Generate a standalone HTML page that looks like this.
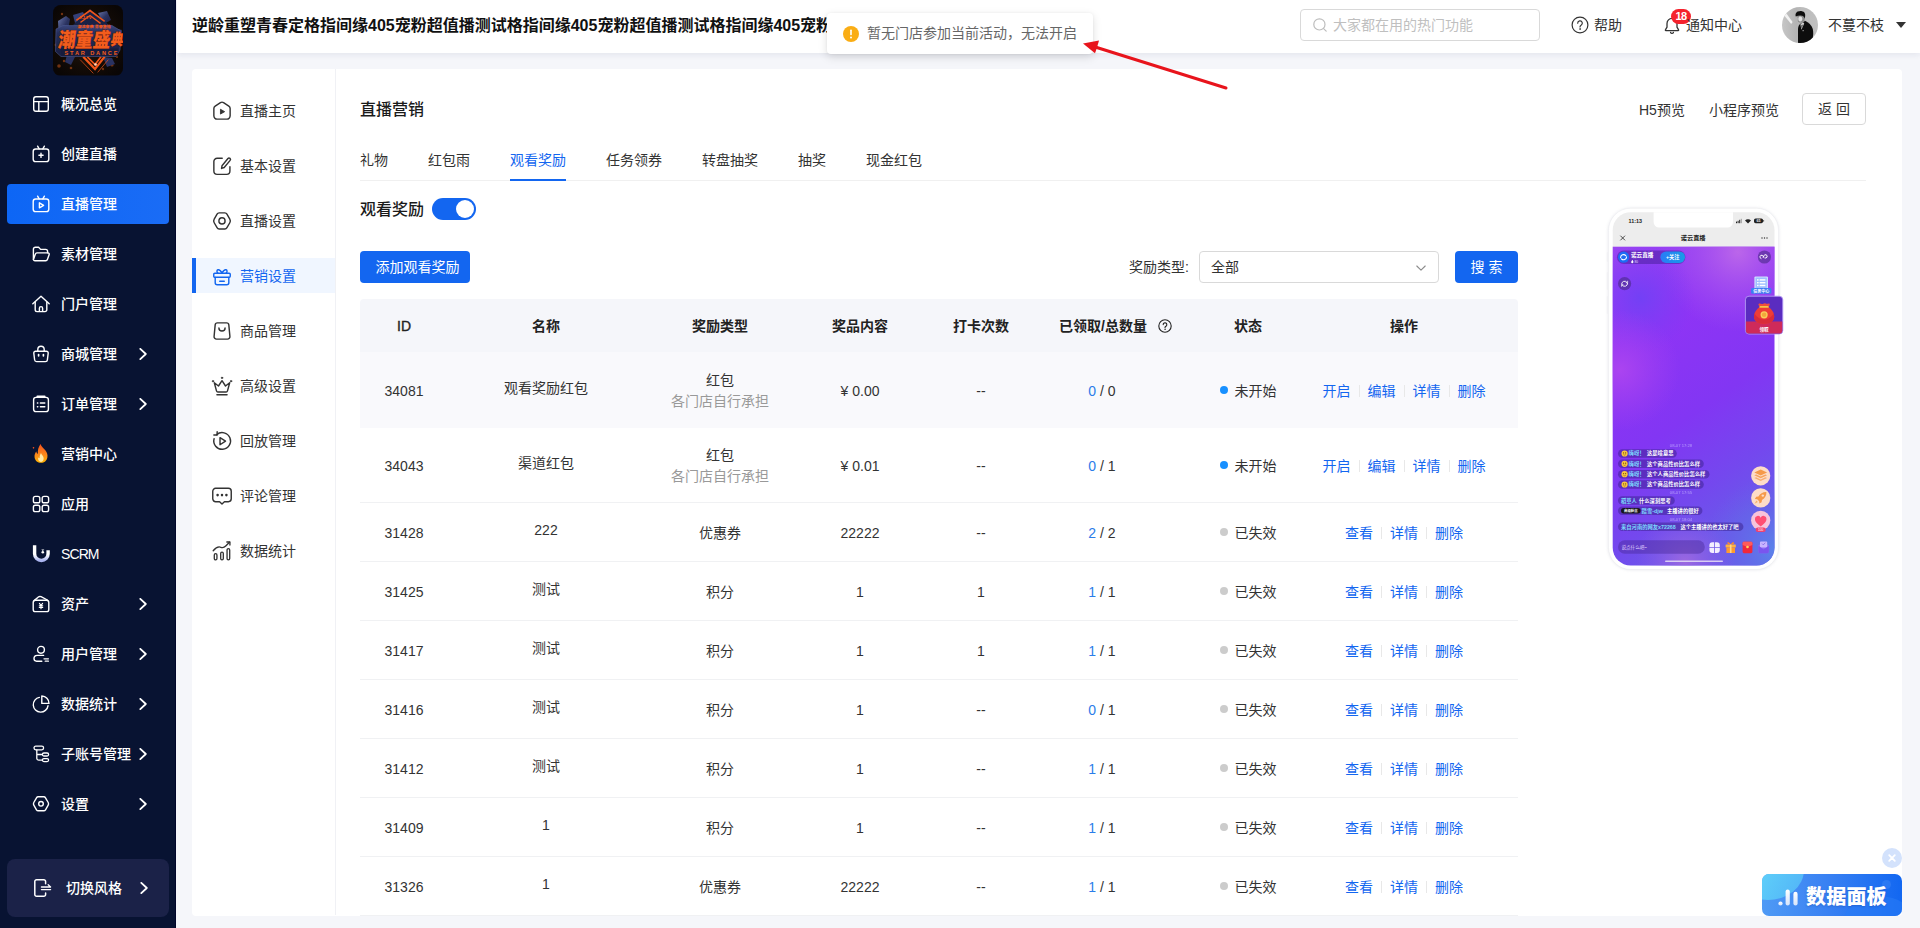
<!DOCTYPE html>
<html lang="zh-CN">
<head>
<meta charset="utf-8">
<title>直播营销</title>
<style>
*{box-sizing:border-box;margin:0;padding:0}
html,body{width:1920px;height:928px;overflow:hidden}
body{position:relative;background:#f5f6fa;font-family:"Liberation Sans","Noto Sans CJK SC",sans-serif;font-size:14px;color:#333;line-height:1}
svg{display:block}
.abs{position:absolute}
/* sidebar */
#side{position:absolute;left:0;top:0;width:176px;height:928px;background:#081332;border-right:1px solid #01062a}
#logo{position:absolute;left:53px;top:5px;width:70px;height:71px;border-radius:8px;overflow:hidden;background:#0a0d1c}
.nav{position:absolute;left:7px;width:162px;height:40px;border-radius:4px;color:#fff;font-size:14px}
.nav.on{background:linear-gradient(90deg,#0d66f5,#1a6cf6)}
.nav .ic{position:absolute;left:24px;top:10px;width:20px;height:20px}
.nav .tx{position:absolute;left:54px;top:0;line-height:40px;white-space:nowrap;font-weight:500}
.nav .ar{position:absolute;left:130px;top:14px;width:12px;height:12px}
#sw{position:absolute;left:7px;top:859px;width:162px;height:58px;border-radius:8px;background:#1b2248;color:#fff}
/* header */
#hd{position:absolute;left:177px;top:0;width:1743px;height:53px;background:#fff;box-shadow:0 2px 6px rgba(30,40,90,.08)}
#ttl{position:absolute;left:15px;top:0;width:636px;height:53px;line-height:52px;font-size:16px;font-weight:700;color:#111;white-space:nowrap;overflow:hidden}
#srch{position:absolute;left:1123px;top:9px;width:240px;height:32px;border:1px solid #d9d9d9;border-radius:4px;background:#fff}
#srch span{position:absolute;left:32px;top:0;line-height:30px;color:#bfbfbf;font-size:14px;white-space:nowrap}
.htx{position:absolute;top:0;line-height:50px;font-size:14px;color:#333;white-space:nowrap}
/* toast */
#toast{position:absolute;left:827px;top:13px;width:266px;height:41px;background:#fff;border-radius:4px;box-shadow:0 3px 10px rgba(0,0,0,.13),0 0 3px rgba(0,0,0,.05);z-index:5}
#toast span{position:absolute;left:40px;top:0;line-height:41px;color:#666;font-size:14px;white-space:nowrap}
/* card */
#card{position:absolute;left:192px;top:69px;width:1710px;height:847px;background:#fff;border-radius:4px;overflow:hidden}
#sub{position:absolute;left:0;top:0;width:144px;height:846px;border-right:1px solid #f0f1f5}
.si{position:absolute;left:0;width:143px;height:38px;color:#333;font-size:14px}
.si.on{background:#f0f6ff;color:#1366f0;border-left:4px solid #1366f0}
.si .ic{position:absolute;left:20px;top:10px;width:20px;height:20px;transform:scale(1.1)}
.si.on .ic{left:16px;transform:scale(1.03)}
.si .tx{position:absolute;left:48px;top:1px;line-height:38px;white-space:nowrap}
.si.on .tx{left:44px}

/* main */
#main{position:absolute;left:168px;top:0;width:1542px;height:846px}
#h1{position:absolute;left:0;top:25px;line-height:32px;font-size:16px;font-weight:500;color:#1a1a1a}
.lk{position:absolute;top:25px;line-height:32px;font-size:14px;color:#333;white-space:nowrap}
#back{position:absolute;left:1442px;top:24px;width:64px;height:32px;border:1px solid #d9d9d9;border-radius:4px;text-align:center;line-height:30px;font-size:14px;color:#333}
#tabs{position:absolute;left:0;top:70px;width:1506px;height:42px;border-bottom:1px solid #f0f0f0}
#tabs span{position:absolute;top:0;line-height:42px;font-size:14px;color:#333;white-space:nowrap}
#tabs span.on{color:#1366f0}
#tabs i{position:absolute;left:150px;top:40px;width:56px;height:2px;background:#1366f0}
#tg{position:absolute;left:72px;top:129px;width:44px;height:22px;border-radius:11px;background:#1366f0}
#tg i{position:absolute;right:2px;top:2px;width:18px;height:18px;border-radius:9px;background:#fff}
.btn{position:absolute;top:182px;height:32px;border-radius:4px;background:#1366f0;color:#fff;font-size:14px;line-height:32px;text-align:center;white-space:nowrap}
#sel{position:absolute;left:839px;top:182px;width:240px;height:32px;border:1px solid #d9d9d9;border-radius:4px}
/* table */
#tb{position:absolute;left:0;top:230px;width:1158px;border-collapse:separate;border-spacing:0;table-layout:fixed;font-size:14px;color:#333}
#tb th{height:53px;background:#f5f6fa;font-weight:700;color:#222;text-align:center;padding:0}
#tb td{height:59px;text-align:center;padding:2px 0 0;line-height:21px;border-bottom:1px solid #f0f1f3;vertical-align:middle;white-space:nowrap}
#tb tr.r1 td{height:76px;background:#f9f9fc;border-bottom:none}
#tb th:first-child{border-top-left-radius:4px}#tb th:last-child{border-top-right-radius:4px}
#tb tr.r2 td{height:75px}
#tb .nm{position:relative;top:-3px}
#tb .g{color:#999;line-height:21px}
#tb .b{color:#2b7de9}
#tb a{color:#1366f0;text-decoration:none}
#tb .sp{display:inline-block;width:1px;height:12px;background:#e8e8e8;margin:0 8px;vertical-align:-1px}
#tb .dot{display:inline-block;width:8px;height:8px;border-radius:4px;margin-right:7px;vertical-align:2px}
</style>
</head>
<body>
<div id="side">
  <div id="logo">
    <svg width="70" height="70" viewBox="0 0 70 70" font-family="'Liberation Sans','Noto Sans CJK SC',sans-serif">
      <defs>
        <radialGradient id="lg1" cx="50%" cy="50%" r="62%"><stop offset="0" stop-color="#2a1a10"/><stop offset=".6" stop-color="#140c07"/><stop offset="1" stop-color="#0a0605"/></radialGradient>
        <linearGradient id="lg2" x1="0" y1="0" x2="0" y2="1"><stop offset="0" stop-color="#3a467c"/><stop offset=".25" stop-color="#252d5a"/><stop offset="1" stop-color="#181d3e"/></linearGradient>
        <linearGradient id="lg3" x1="0" y1="0" x2="1" y2="1"><stop offset="0" stop-color="#6a76a8"/><stop offset=".5" stop-color="#2a3260"/><stop offset="1" stop-color="#1a2044"/></linearGradient>
        <filter id="lgb" x="-20%" y="-20%" width="140%" height="140%"><feGaussianBlur stdDeviation=".5"/></filter>
      </defs>
      <rect width="70" height="70" fill="url(#lg1)"/>
      <g fill="#c4561a" opacity=".55" filter="url(#lgb)"><circle cx="6" cy="61" r="1.800"/><circle cx="11" cy="56" r="1.200"/><circle cx="59" cy="60" r="1.600"/><circle cx="64" cy="52" r="1.100"/><circle cx="9" cy="9" r="1.200"/><circle cx="18" cy="63" r="1.300"/><circle cx="50" cy="64" r="1.200"/><circle cx="3" cy="40" r="1.400"/></g>
      <!-- shards -->
      <g filter="url(#lgb)">
        <path d="M5 16l8-5 4 3-3 18-8 3z" fill="url(#lg3)"/>
        <path d="M45 8l9-2 4 9-7 4z" fill="url(#lg3)"/>
        <path d="M61 23l8 2-1 9-7-1z" fill="url(#lg3)"/>
        <path d="M14 50l8 2-4 8-6-3z" fill="#2a3260"/>
        <path d="M50 52l9 1 3 6-8 3z" fill="#2a3260"/>
        <path d="M20 10l10-3 3 6-11 5z" fill="#343f78"/>
      </g>
      <!-- diamond neon -->
      <path d="M37 4l19 16-19 10-17-10z" fill="#1a2146"/>
      <g fill="none" stroke="#f0551a" stroke-linecap="square">
        <path d="M24 15l13-9.500 14 10.500" stroke-width="1.600"/>
        <path d="M28 17l9-6.500 10 7.500" stroke-width="1.300"/>
        <path d="M31 52.500l11 11.500 9-11.500" stroke-width="2.200"/>
        <path d="M35 52.500l7 7 5.500-7" stroke-width="1.700"/>
        <path d="M27.500 55l12.500 13 M55 55l-10 12" stroke-width="1" opacity=".7"/>
      </g>
      <circle cx="42.500" cy="59.500" r="1.300" fill="#ffd9c0" filter="url(#lgb)"/>
      <!-- plaque -->
      <path d="M3 24l7-3.500h49l9 5.500-1 19-4 6.500H8l-5.500-5z" fill="url(#lg2)" stroke="#4a588f" stroke-width=".6"/>
      <path d="M7 43.600h58v7H9z" fill="#171c3d"/>
      <text x="26.500" y="13.900" font-size="4.400" font-weight="700" fill="#f0551a">XJ TV</text>
      <text x="24.600" y="23.200" font-size="3.900" font-weight="900" fill="#f0551a" letter-spacing=".1">潮流来袭 青春集结</text>
      <g transform="translate(4.500 41.600) skewX(-7) scale(1 1.220)">
        <text x="0" y="0" font-size="16.400" font-weight="900" fill="#f25c1c" stroke="#7a2206" stroke-width=".5" paint-order="stroke" textLength="52" lengthAdjust="spacingAndGlyphs">潮童盛</text>
        <text x="52.600" y="-1" font-size="12.600" font-weight="900" fill="#f25c1c" stroke="#7a2206" stroke-width=".5" paint-order="stroke">典</text>
      </g>
      <text x="38" y="49.600" text-anchor="middle" font-size="5.600" font-weight="700" fill="#f25c1c" textLength="53" lengthAdjust="spacing">STAR DANCE</text>
    </svg>
  </div>

  <div class="nav" style="top:84px"><svg class="ic" viewBox="0 0 20 20" fill="none" stroke="#fff" stroke-width="1.4" stroke-linejoin="round"><rect x="2.7" y="2.7" width="14.6" height="14.6" rx="2.2"/><path d="M2.7 7.6h14.6M7.8 7.6v9.7"/></svg><span class="tx">概况总览</span></div>

  <div class="nav" style="top:134px"><svg class="ic" viewBox="0 0 20 20" fill="none" stroke="#fff" stroke-width="1.4" stroke-linecap="round" stroke-linejoin="round"><rect x="2.2" y="5" width="15.6" height="12.6" rx="2.4"/><path d="M6.6 2.2l1.6 2.6M13.4 2.2l-1.6 2.6M10 9.2v4.2M7.9 11.3h4.2"/></svg><span class="tx">创建直播</span></div>

  <div class="nav on" style="top:184px"><svg class="ic" viewBox="0 0 20 20" fill="none" stroke="#fff" stroke-width="1.4" stroke-linecap="round" stroke-linejoin="round"><rect x="2.2" y="5" width="15.6" height="12.6" rx="2.4"/><path d="M6.6 2.2l1.6 2.6M13.4 2.2l-1.6 2.6M8.4 8.8v5l4.2-2.5z"/></svg><span class="tx">直播管理</span></div>

  <div class="nav" style="top:234px"><svg class="ic" viewBox="0 0 20 20" fill="none" stroke="#fff" stroke-width="1.4" stroke-linecap="round" stroke-linejoin="round"><path d="M2.4 15.2V5.2a2 2 0 0 1 2-2h3.2l2 2.2h5a2 2 0 0 1 2 2v1.4"/><path d="M2.4 15.6l2-5.6a1.6 1.6 0 0 1 1.5-1.1h11a1.3 1.3 0 0 1 1.2 1.8l-1.7 4.9a1.8 1.8 0 0 1-1.7 1.2H4a1.6 1.6 0 0 1-1.6-1.2z"/></svg><span class="tx">素材管理</span></div>

  <div class="nav" style="top:284px"><svg class="ic" viewBox="0 0 20 20" fill="none" stroke="#fff" stroke-width="1.4" stroke-linecap="round" stroke-linejoin="round"><path d="M1.8 9.8L10 2.2l8.200 7.600"/><path d="M4.200 8.200v7.600a1.800 1.800 0 0 0 1.800 1.800h8a1.800 1.800 0 0 0 1.800-1.800V8.200"/><path d="M8.400 17.400v-3.200a1.600 1.600 0 0 1 3.200 0v3.200"/></svg><span class="tx">门户管理</span></div>

  <div class="nav" style="top:334px"><svg class="ic" viewBox="0 0 20 20" fill="none" stroke="#fff" stroke-width="1.4" stroke-linecap="round" stroke-linejoin="round"><path d="M4.600 7.200h10.800a1.800 1.800 0 0 1 1.800 2l-.8 6.600a2 2 0 0 1-2 1.800H5.600a2 2 0 0 1-2-1.800l-.8-6.600a1.800 1.800 0 0 1 1.800-2z"/><path d="M6.800 7V5.400a3.200 3.200 0 0 1 6.400 0V7"/><path d="M7.600 10.600v1.200M12.400 10.600v1.200" stroke-width="1.700"/></svg><span class="tx">商城管理</span><svg class="ar" viewBox="0 0 12 12" fill="none" stroke="#fff" stroke-width="1.8" stroke-linecap="round" stroke-linejoin="round"><path d="M3.300 .9L8.800 6 3.300 11.100"/></svg></div>

  <div class="nav" style="top:384px"><svg class="ic" viewBox="0 0 20 20" fill="none" stroke="#fff" stroke-width="1.4" stroke-linecap="round" stroke-linejoin="round"><rect x="2.600" y="3.400" width="14.800" height="14.200" rx="2.400"/><path d="M6.400 2.600h7.200" stroke-width="2"/><path d="M6.400 9h.4M6.400 12.800h.4M9.400 9h4.400M9.400 12.800h4.400"/></svg><span class="tx">订单管理</span><svg class="ar" viewBox="0 0 12 12" fill="none" stroke="#fff" stroke-width="1.8" stroke-linecap="round" stroke-linejoin="round"><path d="M3.300 .9L8.800 6 3.300 11.100"/></svg></div>

  <div class="nav" style="top:434px"><svg class="ic" viewBox="1.200 1.400 17.600 17.600"><defs><linearGradient id="fl1" x1="0" y1="0" x2="0" y2="1"><stop offset="0" stop-color="#f4511e"/><stop offset=".6" stop-color="#fb8c1a"/><stop offset="1" stop-color="#ffb300"/></linearGradient></defs><path d="M9.600 1.400c.6 2.400 2.600 3.600 4.200 5.600 1.600 2 2.200 4 1.800 6.200-.5 2.700-2.700 4.800-5.600 4.800s-5.100-2-5.600-4.600c-.4-2.200.4-4 1.400-5.400.2 1 .7 1.700 1.400 2.100-.2-3.300.6-6.300 2.400-8.700z" fill="url(#fl1)"/><path d="M10 9.400c.3 1.400 1.500 2 2.100 3.400.6 1.500.1 3.200-1.100 4.100-.6.500-1.500.5-2.100 0-1.300-.9-1.700-2.500-1.200-3.900.3.600.7.900 1.100 1 0-1.700.3-3.300 1.200-4.600z" fill="#ffe9a8"/><circle cx="3.400" cy="4.800" r=".7" fill="#f4511e"/></svg><span class="tx">营销中心</span></div>

  <div class="nav" style="top:484px"><svg class="ic" viewBox="0 0 20 20" fill="none" stroke="#fff" stroke-width="1.4" stroke-linejoin="round"><rect x="2.400" y="2.400" width="6.400" height="6.400" rx="1.900"/><rect x="11.200" y="2.400" width="6.400" height="6.400" rx="1.900"/><rect x="2.400" y="11.200" width="6.400" height="6.400" rx="1.900"/><rect x="11.200" y="11.200" width="6.400" height="6.400" rx="1.900"/></svg><span class="tx">应用</span></div>

  <div class="nav" style="top:534px"><svg class="ic" viewBox="0 0 20 20"><defs><linearGradient id="sc1" x1="0" y1="0" x2="0" y2="1"><stop offset="0" stop-color="#fff"/><stop offset=".62" stop-color="#fff"/><stop offset="1" stop-color="#aab4f0"/></linearGradient></defs><path d="M3.600 1.300v8.500a6.750 6.750 0 0 0 13.500 0V6.200" fill="none" stroke="url(#sc1)" stroke-width="3.400" stroke-linecap="butt"/><path d="M10.300 5.400l1.500 1.700 1.500-1.700z" fill="#fff"/><circle cx="11.800" cy="8.300" r="1.300" fill="#fff"/></svg><span class="tx" style="letter-spacing:-.9px">SCRM</span></div>

  <div class="nav" style="top:584px"><svg class="ic" viewBox="0 0 20 20" fill="none" stroke="#fff" stroke-width="1.400" stroke-linecap="round" stroke-linejoin="round"><rect x="2.200" y="6.200" width="15.600" height="11.400" rx="2.200"/><path d="M3.400 6.400l4-3.400c.9-.7 1.600-.7 2.600-.3l6.400 3.300"/><path d="M8.400 9.400l1.600 2 1.600-2M10 11.400v3.400M8.300 11.800h3.400M8.300 13.400h3.400" stroke-width="1.100"/></svg><span class="tx">资产</span><svg class="ar" viewBox="0 0 12 12" fill="none" stroke="#fff" stroke-width="1.8" stroke-linecap="round" stroke-linejoin="round"><path d="M3.300 .9L8.800 6 3.300 11.100"/></svg></div>

  <div class="nav" style="top:634px"><svg class="ic" viewBox="0 0 20 20" fill="none" stroke="#fff" stroke-width="1.400" stroke-linecap="round" stroke-linejoin="round"><circle cx="10" cy="5.800" r="3.400"/><path d="M12.600 11.400H6.200a3.200 3.200 0 0 0-3.200 3.200 2.600 2.600 0 0 0 2.600 2.600h5.200"/><path d="M13 14.800h4.400M14.200 17.200h3.200" stroke-width="1.300"/></svg><span class="tx">用户管理</span><svg class="ar" viewBox="0 0 12 12" fill="none" stroke="#fff" stroke-width="1.8" stroke-linecap="round" stroke-linejoin="round"><path d="M3.300 .9L8.800 6 3.300 11.100"/></svg></div>

  <div class="nav" style="top:684px"><svg class="ic" viewBox="0 0 20 20" fill="none" stroke="#fff" stroke-width="1.400" stroke-linecap="round" stroke-linejoin="round"><path d="M8.400 3.400a7.400 7.400 0 1 0 8.600 8.400"/><path d="M10.800 2v7.400h7.200A7.300 7.300 0 0 0 10.800 2z"/></svg><span class="tx">数据统计</span><svg class="ar" viewBox="0 0 12 12" fill="none" stroke="#fff" stroke-width="1.8" stroke-linecap="round" stroke-linejoin="round"><path d="M3.300 .9L8.800 6 3.300 11.100"/></svg></div>

  <div class="nav" style="top:734px"><svg class="ic" viewBox="0 0 20 20" fill="none" stroke="#fff" stroke-width="1.300" stroke-linecap="round" stroke-linejoin="round"><rect x="3" y="2.200" width="9.600" height="3.600" rx="1.800"/><rect x="11.400" y="9" width="6.200" height="3" rx="1.500"/><rect x="11.400" y="14.600" width="6.200" height="3" rx="1.500"/><path d="M5.800 5.800v8.400a2 2 0 0 0 2 2h3.400M5.800 10.500h5.400"/></svg><span class="tx">子账号管理</span><svg class="ar" viewBox="0 0 12 12" fill="none" stroke="#fff" stroke-width="1.8" stroke-linecap="round" stroke-linejoin="round"><path d="M3.300 .9L8.800 6 3.300 11.100"/></svg></div>

  <div class="nav" style="top:784px"><svg class="ic" viewBox="0 0 20 20" fill="none" stroke="#fff" stroke-width="1.400" stroke-linecap="round" stroke-linejoin="round"><path d="M7.200 2.800h5.600a2 2 0 0 1 1.700 1l2.700 4.700a2.600 2.600 0 0 1 0 2.600l-2.700 4.700a2 2 0 0 1-1.700 1H7.200a2 2 0 0 1-1.700-1l-2.700-4.700a2.600 2.600 0 0 1 0-2.600l2.700-4.700a2 2 0 0 1 1.700-1z"/><circle cx="10" cy="9.800" r="2.300"/></svg><span class="tx">设置</span><svg class="ar" viewBox="0 0 12 12" fill="none" stroke="#fff" stroke-width="1.8" stroke-linecap="round" stroke-linejoin="round"><path d="M3.300 .9L8.800 6 3.300 11.100"/></svg></div>

  <div id="sw"><svg class="abs" style="left:25px;top:18px" width="22" height="22" viewBox="0 0 22 22" fill="none" stroke="#fff" stroke-width="1.500" stroke-linecap="round" stroke-linejoin="round"><path d="M13.600 6.800V4.600a1.800 1.800 0 0 0-1.800-1.800H4.600a1.800 1.800 0 0 0-1.800 1.800v12.800a1.800 1.800 0 0 0 1.800 1.800h7.200a1.800 1.800 0 0 0 1.800-1.800v-1.400"/><path d="M9.400 10h9.200l-2.400-2.200M18.600 12.600H9.400" stroke-width="1.300"/></svg><span class="abs" style="left:59px;top:0;line-height:58px;font-size:14px;font-weight:500;white-space:nowrap">切换风格</span><svg class="abs" style="left:131px;top:23px" width="12" height="12" viewBox="0 0 12 12" fill="none" stroke="#fff" stroke-width="1.8" stroke-linecap="round" stroke-linejoin="round"><path d="M3.300 .9L8.800 6 3.300 11.100"/></svg></div>
</div>
<div id="hd">
  <div id="ttl">逆龄重塑青春定格指间缘405宠粉超值播测试格指间缘405宠粉超值播测试格指间缘405宠粉超值播测试</div>
  <div id="srch"><svg class="abs" style="left:11px;top:7px" width="16" height="16" viewBox="0 0 16 16" fill="none" stroke="#bdbdbd" stroke-width="1.2" stroke-linecap="round"><circle cx="7.400" cy="7.400" r="5.600"/><path d="M11.600 11.600l2.600 2.600"/></svg><span>大家都在用的热门功能</span></div>
  <svg class="abs" style="left:1394px;top:16px" width="18" height="18" viewBox="0 0 18 18" fill="none" stroke="#333" stroke-width="1.200" stroke-linecap="round"><circle cx="9" cy="9" r="7.900"/><path d="M6.700 7.200a2.300 2.300 0 1 1 3.400 2c-.8.500-1.100.9-1.100 1.700"/><circle cx="9" cy="13" r=".5" fill="#333" stroke-width=".6"/></svg>
  <div class="htx" style="left:1417px">帮助</div>
  <svg class="abs" style="left:1486px;top:16px" width="18" height="19" viewBox="0 0 18 19" fill="none" stroke="#333" stroke-width="1.300" stroke-linecap="round" stroke-linejoin="round"><path d="M9 2.400a5 5 0 0 0-5 5v3.800l-1.600 2.600a.5.500 0 0 0 .4.800h12.400a.5.500 0 0 0 .4-.8L14 11.200V7.400a5 5 0 0 0-5-5z"/><path d="M7.600 16.400a1.500 1.500 0 0 0 2.800 0"/></svg>
  <div class="abs" style="left:1494px;top:9px;width:20px;height:15px;border-radius:8px;background:#f5222d;color:#fff;font-size:11px;font-weight:700;line-height:15px;text-align:center;letter-spacing:-.5px">18</div>
  <div class="htx" style="left:1509px">通知中心</div>
  <svg class="abs" style="left:1605px;top:7px" width="36" height="36" viewBox="0 0 36 36"><defs><clipPath id="avc"><circle cx="18" cy="18" r="18"/></clipPath><linearGradient id="avg" x1="0" y1="0" x2="1" y2="0"><stop offset="0" stop-color="#c6c6c6"/><stop offset=".4" stop-color="#b4b4b4"/><stop offset=".55" stop-color="#bcbcbc"/><stop offset="1" stop-color="#c0c0c0"/></linearGradient><filter id="avb" x="-20%" y="-20%" width="140%" height="140%"><feGaussianBlur stdDeviation=".45"/></filter></defs><g clip-path="url(#avc)"><rect width="36" height="36" fill="url(#avg)"/><g filter="url(#avb)"><path d="M2 8.200l2.400-1.800 6.200 8.600-1.400 2z" fill="#f2f2f2"/><path d="M16 36V22.500c0-2.400.6-4.200 2-5.400l5-3.300c3.600 1.600 6.600 4.400 7.800 8.200.6 3 .5 6 0 8.600L27 36z" fill="#101010"/><path d="M18.400 17.600l2.400-2.600 1.400 1.400-2.800 6.400z" fill="#cfcfcf"/><path d="M19.300 18.400l1-.8.400 1-1.200 3z" fill="#3a3a3a"/><path d="M15 9.500c.5-1.500 2.500-2.500 5-2.300 1.800.1 2.700 1.300 2.900 3.300l-.5 3.700c-.7 1.200-2.400 1.700-4.300 1.400-1.500-.2-2.100-.8-2.300-1.700-.2-1 .2-1.800.1-2.700z" fill="#8a8a8a"/><path d="M17 9.600c1.800-.4 3 .2 3.300 1.700.3 1.500-.3 2.800-1.700 3.200-1.100.3-1.900-.3-2.200-1.400-.3-1.200-.1-2.300.6-3.500z" fill="#dedede"/><path d="M13.800 6.600c.8-2 3.400-2.800 6.200-2.400 2.400.4 3.400 2.200 3.200 4.600l-.4 3c-.5-1.700-1.400-2.700-2.800-3-2-.5-4.200-.3-6.200.8-.4-1-.4-2 0-3z" fill="#0c0c0c"/><rect x="20.400" y="23.400" width="1.600" height=".7" fill="#bbb"/></g></g></svg>
  <div class="htx" style="left:1651px">不蔓不枝</div>
  <svg class="abs" style="left:1719px;top:22px" width="10" height="6" viewBox="0 0 10 6"><path d="M0 0h10L5 6z" fill="#333"/></svg>
</div>
<div id="toast"><svg class="abs" style="left:16px;top:13px" width="16" height="16" viewBox="0 0 16 16"><circle cx="8" cy="8" r="8" fill="#faad14"/><rect x="7.200" y="3.600" width="1.600" height="5.600" rx=".6" fill="#fff"/><circle cx="8" cy="11.500" r="1" fill="#fff"/></svg><span>暂无门店参加当前活动，无法开启</span></div>
<svg class="abs" style="left:1070px;top:30px;z-index:6" width="170" height="70" viewBox="0 0 170 70"><path d="M156 58L26 17.200" stroke="#e8141c" stroke-width="3" stroke-linecap="round" fill="none"/><path d="M13 13.600L29 10.600 27 17.400 25 23.200z" fill="#e8141c"/></svg>
<div id="card">
  <div id="sub">
    <div class="si" style="top:22px"><svg class="ic" viewBox="0 0 20 20" fill="none" stroke="#333" stroke-width="1.300" stroke-linejoin="round"><path d="M8.600 2.400a2.600 2.600 0 0 1 2.800 0l4.800 3.100a2.600 2.600 0 0 1 1.200 2.200v6.700a3 3 0 0 1-3 3H5.600a3 3 0 0 1-3-3V7.700a2.600 2.600 0 0 1 1.200-2.200z"/><path d="M8.600 8.400v4.400l3.800-2.200z" fill="#333" stroke-width=".8"/></svg><span class="tx">直播主页</span></div>
    <div class="si" style="top:77px"><svg class="ic" viewBox="0 0 20 20" fill="none" stroke="#333" stroke-width="1.300" stroke-linecap="round" stroke-linejoin="round"><path d="M10.200 3H5.600a3 3 0 0 0-3 3v8.600a3 3 0 0 0 3 3h8.600a3 3 0 0 0 3-3V10.600"/><path d="M10 9.800l5.400-6.600a1.300 1.300 0 0 1 2 1.700L12 11.400l-2.400.8z"/></svg><span class="tx">基本设置</span></div>
    <div class="si" style="top:132px"><svg class="ic" viewBox="0 0 20 20" fill="none" stroke="#333" stroke-width="1.300" stroke-linejoin="round"><path d="M7.400 2.600h5.200a2.200 2.200 0 0 1 1.900 1.100l2.600 4.500a3.400 3.400 0 0 1 0 3.400l-2.600 4.500a2.200 2.200 0 0 1-1.900 1.100H7.400a2.200 2.200 0 0 1-1.900-1.100l-2.600-4.500a3.400 3.400 0 0 1 0-3.400l2.600-4.500a2.200 2.200 0 0 1 1.900-1.100z"/><circle cx="10" cy="9.900" r="2.800"/></svg><span class="tx">直播设置</span></div>
    <div class="si on" style="top:189px;height:35px"><svg class="ic" style="top:9px" viewBox="0 0 20 20" fill="none" stroke="#1366f0" stroke-width="1.400" stroke-linecap="round" stroke-linejoin="round"><path d="M3 6.400h14a1 1 0 0 1 1 1v1.800a1 1 0 0 1-1 1H3a1 1 0 0 1-1-1V7.400a1 1 0 0 1 1-1z"/><path d="M3.400 10.400v5.200a2 2 0 0 0 2 2h9.200a2 2 0 0 0 2-2v-5.200"/><path d="M10 6.200C8.600 3.600 7.200 2.600 6 3s-1.200 2.400 0 3.200M10 6.200c1.400-2.600 2.800-3.600 4-3.200s1.200 2.400 0 3.200"/><path d="M7.800 14.200h4.400"/></svg><span class="tx" style="line-height:35px">营销设置</span></div>
    <div class="si" style="top:242px"><svg class="ic" viewBox="0 0 20 20" fill="none" stroke="#333" stroke-width="1.300" stroke-linecap="round" stroke-linejoin="round"><path d="M5.800 2.600h8.400a2 2 0 0 1 2 1.800l1 10.600a2.200 2.200 0 0 1-2.200 2.400H5a2.200 2.200 0 0 1-2.200-2.400l1-10.600a2 2 0 0 1 2-1.800z"/><path d="M7.200 7.200a2.800 2.800 0 0 0 5.600 0"/></svg><span class="tx">商品管理</span></div>
    <div class="si" style="top:297px"><svg class="ic" viewBox="0 0 20 20" fill="none" stroke="#333" stroke-width="1.300" stroke-linecap="round" stroke-linejoin="round"><path d="M3 7l2 7.400a1.400 1.400 0 0 0 1.400 1h7.200a1.400 1.400 0 0 0 1.400-1L17 7l-3.800 3L10 5.200 6.800 10z"/><path d="M5.400 18h9.200"/><circle cx="10" cy="2.600" r=".7" fill="#333" stroke-width=".6"/><circle cx="1.800" cy="5.600" r=".7" fill="#333" stroke-width=".6"/><circle cx="18.200" cy="5.600" r=".7" fill="#333" stroke-width=".6"/></svg><span class="tx">高级设置</span></div>
    <div class="si" style="top:352px"><svg class="ic" viewBox="0 0 20 20" fill="none" stroke="#333" stroke-width="1.300" stroke-linecap="round" stroke-linejoin="round"><path d="M5.200 4.200A7.600 7.600 0 1 1 2.800 8"/><path d="M5.600 1.600v3h-3" /><path d="M8.200 7v6.400l5-3.200z"/></svg><span class="tx">回放管理</span></div>
    <div class="si" style="top:407px"><svg class="ic" viewBox="0 0 20 20" fill="none" stroke="#333" stroke-width="1.300" stroke-linecap="round" stroke-linejoin="round"><path d="M4.200 3h11.600a2.600 2.600 0 0 1 2.600 2.600v7a2.600 2.600 0 0 1-2.600 2.600h-3.600L10 17.200l-2.200-2H4.200a2.600 2.600 0 0 1-2.600-2.600v-7A2.600 2.600 0 0 1 4.200 3z"/><circle cx="6" cy="9.200" r="1.150" fill="#333" stroke="none"/><circle cx="10" cy="9.200" r="1.150" fill="#333" stroke="none"/><circle cx="14" cy="9.200" r="1.150" fill="#333" stroke="none"/></svg><span class="tx">评论管理</span></div>
    <div class="si" style="top:462px"><svg class="ic" viewBox="0 0 20 20" fill="none" stroke="#333" stroke-width="1.200" stroke-linecap="round" stroke-linejoin="round"><rect x="3" y="12.400" width="2.400" height="5.600" rx="1.200"/><rect x="8.800" y="11" width="2.400" height="7" rx="1.200"/><rect x="14.600" y="7.800" width="2.400" height="10.200" rx="1.200"/><path d="M2 9.800c2.400-3 4.800-4 7-3.200 1.600.6 3 .2 4.400-1.200l3.400-3.400"/><path d="M14.400 1.800h2.800v2.800" /></svg><span class="tx">数据统计</span></div>
  </div>
  <div id="main">
    <div id="h1">直播营销</div>
    <div class="lk" style="left:1279px">H5预览</div>
    <div class="lk" style="left:1349px">小程序预览</div>
    <div id="back">返 回</div>
    <div id="tabs"><span style="left:0">礼物</span><span style="left:68px">红包雨</span><span class="on" style="left:150px">观看奖励</span><span style="left:246px">任务领券</span><span style="left:342px">转盘抽奖</span><span style="left:438px">抽奖</span><span style="left:506px">现金红包</span><i></i></div>
    <div class="abs" style="left:0;top:125px;line-height:32px;font-size:16px;font-weight:500;color:#1a1a1a;white-space:nowrap">观看奖励</div>
    <div id="tg"><i></i></div>
    <div class="btn" style="left:0;width:110px;padding-left:5px">添加观看奖励</div>
    <div class="abs" style="left:769px;top:182px;line-height:32px;color:#333;white-space:nowrap">奖励类型:</div>
    <div id="sel"><span class="abs" style="left:11px;top:0;line-height:30px;color:#333">全部</span><svg class="abs" style="left:215px;top:10px" width="12" height="12" viewBox="0 0 12 12" fill="none" stroke="#8c8c8c" stroke-width="1.100" stroke-linecap="round" stroke-linejoin="round"><path d="M1.800 4l4.200 4.200L10.200 4"/></svg></div>
    <div class="btn" style="left:1095px;width:63px">搜 索</div>
    <table id="tb">
      <colgroup><col style="width:88px"><col style="width:196px"><col style="width:152px"><col style="width:128px"><col style="width:114px"><col style="width:148px"><col style="width:124px"><col style="width:208px"></colgroup>
      <tr><th style="font-weight:400;-webkit-text-stroke:.35px #222">ID</th><th>名称</th><th>奖励类型</th><th>奖品内容</th><th>打卡次数</th><th style="padding-left:7px">已领取/总数量<svg style="display:inline-block;vertical-align:-2px;margin-left:11px" width="14" height="14" viewBox="0 0 14 14" fill="none" stroke="#222" stroke-width="1.100" stroke-linecap="round"><circle cx="7" cy="7" r="6.200"/><path d="M5.200 5.600a1.800 1.800 0 1 1 2.700 1.600c-.6.400-.9.700-.9 1.300"/><circle cx="7" cy="10.200" r=".4" fill="#222" stroke-width=".5"/></svg></th><th>状态</th><th style="padding-right:20px">操作</th></tr>
      <tr class="r1"><td>34081</td><td><span class="nm">观看奖励红包</span></td><td>红包<div class="g">各门店自行承担</div></td><td>¥ 0.00</td><td>--</td><td style="padding-right:20px"><span class="b">0</span> / 0</td><td><i class="dot" style="background:#1890ff"></i>未开始</td><td style="padding-right:20px"><a>开启</a><i class="sp"></i><a>编辑</a><i class="sp"></i><a>详情</a><i class="sp"></i><a>删除</a></td></tr>
      <tr class="r2"><td>34043</td><td><span class="nm">渠道红包</span></td><td>红包<div class="g">各门店自行承担</div></td><td>¥ 0.01</td><td>--</td><td style="padding-right:20px"><span class="b">0</span> / 1</td><td><i class="dot" style="background:#1890ff"></i>未开始</td><td style="padding-right:20px"><a>开启</a><i class="sp"></i><a>编辑</a><i class="sp"></i><a>详情</a><i class="sp"></i><a>删除</a></td></tr>
      <tr><td>31428</td><td><span class="nm">222</span></td><td>优惠券</td><td>22222</td><td>--</td><td style="padding-right:20px"><span class="b">2</span> / 2</td><td><i class="dot" style="background:#ccc"></i>已失效</td><td style="padding-right:20px"><a>查看</a><i class="sp"></i><a>详情</a><i class="sp"></i><a>删除</a></td></tr>
      <tr><td>31425</td><td><span class="nm">测试</span></td><td>积分</td><td>1</td><td>1</td><td style="padding-right:20px"><span class="b">1</span> / 1</td><td><i class="dot" style="background:#ccc"></i>已失效</td><td style="padding-right:20px"><a>查看</a><i class="sp"></i><a>详情</a><i class="sp"></i><a>删除</a></td></tr>
      <tr><td>31417</td><td><span class="nm">测试</span></td><td>积分</td><td>1</td><td>1</td><td style="padding-right:20px"><span class="b">1</span> / 1</td><td><i class="dot" style="background:#ccc"></i>已失效</td><td style="padding-right:20px"><a>查看</a><i class="sp"></i><a>详情</a><i class="sp"></i><a>删除</a></td></tr>
      <tr><td>31416</td><td><span class="nm">测试</span></td><td>积分</td><td>1</td><td>--</td><td style="padding-right:20px"><span class="b">0</span> / 1</td><td><i class="dot" style="background:#ccc"></i>已失效</td><td style="padding-right:20px"><a>查看</a><i class="sp"></i><a>详情</a><i class="sp"></i><a>删除</a></td></tr>
      <tr><td>31412</td><td><span class="nm">测试</span></td><td>积分</td><td>1</td><td>--</td><td style="padding-right:20px"><span class="b">1</span> / 1</td><td><i class="dot" style="background:#ccc"></i>已失效</td><td style="padding-right:20px"><a>查看</a><i class="sp"></i><a>详情</a><i class="sp"></i><a>删除</a></td></tr>
      <tr><td>31409</td><td><span class="nm">1</span></td><td>积分</td><td>1</td><td>--</td><td style="padding-right:20px"><span class="b">1</span> / 1</td><td><i class="dot" style="background:#ccc"></i>已失效</td><td style="padding-right:20px"><a>查看</a><i class="sp"></i><a>详情</a><i class="sp"></i><a>删除</a></td></tr>
      <tr><td>31326</td><td><span class="nm">1</span></td><td>优惠券</td><td>22222</td><td>--</td><td style="padding-right:20px"><span class="b">1</span> / 1</td><td><i class="dot" style="background:#ccc"></i>已失效</td><td style="padding-right:20px"><a>查看</a><i class="sp"></i><a>详情</a><i class="sp"></i><a>删除</a></td></tr>
    </table>
  </div>
</div>
<svg class="abs" style="left:1600px;top:200px" width="190" height="380" viewBox="0 0 190 380" font-family="'Liberation Sans','Noto Sans CJK SC',sans-serif">
  <defs>
    <clipPath id="scr"><rect x="12.700" y="12.200" width="161.800" height="353.300" rx="18"/></clipPath>
    <linearGradient id="pg0" x1="0" y1="0" x2=".35" y2="1"><stop offset="0" stop-color="#9a45f2"/><stop offset=".3" stop-color="#8f34f5"/><stop offset=".62" stop-color="#8236f3"/><stop offset=".85" stop-color="#7448ee"/><stop offset="1" stop-color="#6a58ea"/></linearGradient>
    <radialGradient id="pg1" cx="138" cy="52" r="80" gradientUnits="userSpaceOnUse"><stop offset="0" stop-color="#bb66ea"/><stop offset=".5" stop-color="#a955ee" stop-opacity=".6"/><stop offset="1" stop-color="#a050f0" stop-opacity="0"/></radialGradient>
    <radialGradient id="pg2" cx="40" cy="98" r="55" gradientUnits="userSpaceOnUse"><stop offset="0" stop-color="#7340f5"/><stop offset="1" stop-color="#7a3cf5" stop-opacity="0"/></radialGradient>
    <radialGradient id="pg3" cx="20" cy="170" r="60" gradientUnits="userSpaceOnUse"><stop offset="0" stop-color="#ab44f0"/><stop offset="1" stop-color="#a040f0" stop-opacity="0"/></radialGradient>
    <radialGradient id="pg4" cx="178" cy="350" r="75" gradientUnits="userSpaceOnUse"><stop offset="0" stop-color="#5a86ea"/><stop offset=".5" stop-color="#6070e8" stop-opacity=".6"/><stop offset="1" stop-color="#6a60ea" stop-opacity="0"/></radialGradient>
    <radialGradient id="pg5" cx="85" cy="362" r="50" gradientUnits="userSpaceOnUse"><stop offset="0" stop-color="#9b68e0"/><stop offset="1" stop-color="#8a5ae8" stop-opacity="0"/></radialGradient>
    <linearGradient id="fw" x1="0" y1="0" x2="1" y2="0"><stop offset="0" stop-color="#2a7cf6"/><stop offset="1" stop-color="#189ae8"/></linearGradient>
    <filter id="psh" x="-10%" y="-10%" width="120%" height="120%"><feGaussianBlur stdDeviation="1.600"/></filter>
  </defs>
  <rect x="8" y="8" width="171" height="362" rx="23" fill="#b8bcc8" opacity=".35" filter="url(#psh)"/>
  <rect x="8.600" y="8.200" width="169.900" height="361.300" rx="22" fill="#fff" stroke="#ececf0" stroke-width=".6"/>
  <rect x="6.800" y="52" width="1.800" height="10" rx=".8" fill="#f1f1f4"/><rect x="6.800" y="72" width="1.800" height="18" rx=".8" fill="#f1f1f4"/><rect x="6.800" y="96" width="1.800" height="18" rx=".8" fill="#f1f1f4"/><rect x="178.500" y="82" width="1.800" height="28" rx=".8" fill="#f1f1f4"/>
  <g clip-path="url(#scr)">
    <rect x="12" y="12" width="164" height="35" fill="#ededed"/>
    <path d="M53.600 12h79.400v10a5.600 5.600 0 0 1-5.600 5.600H59.200a5.600 5.600 0 0 1-5.600-5.600z" fill="#fff"/>
    <rect x="12" y="46.700" width="164" height="320" fill="url(#pg0)"/>
    <rect x="12" y="46.700" width="164" height="320" fill="url(#pg1)"/>
    <rect x="12" y="46.700" width="164" height="320" fill="url(#pg2)"/>
    <rect x="12" y="46.700" width="164" height="320" fill="url(#pg3)"/>
    <rect x="12" y="46.700" width="164" height="320" fill="url(#pg4)"/>
    <rect x="12" y="46.700" width="164" height="320" fill="url(#pg5)"/>
    <!-- status bar -->
    <text x="28.500" y="23.200" font-size="5.400" font-weight="700" fill="#222">11:13</text>
    <g fill="#222"><rect x="136" y="21.600" width="1" height="1.600"/><rect x="137.600" y="20.800" width="1" height="2.400"/><rect x="139.200" y="19.800" width="1" height="3.400"/><rect x="140.800" y="18.800" width="1" height="4.400" opacity=".4"/><path d="M145 20.400a4.200 4.200 0 0 1 6 0l-3 3.200z"/><rect x="154" y="18.400" width="9" height="4.800" rx="1.600"/><rect x="163.300" y="19.900" width=".8" height="1.800" rx=".4"/></g>
    <text x="158.500" y="22.400" font-size="3.600" font-weight="700" fill="#ededed" text-anchor="middle">65</text>
    <!-- nav -->
    <path d="M20.400 35.700l4.600 4.600M25 35.700l-4.600 4.600" stroke="#222" stroke-width=".8" fill="none"/>
    <text x="93.200" y="40.300" font-size="6.200" font-weight="700" fill="#222" text-anchor="middle">诺云直播</text>
    <g fill="#333"><circle cx="162" cy="38" r=".7"/><circle cx="164.500" cy="38" r=".7"/><circle cx="167" cy="38" r=".7"/></g>
    <!-- anchor pill -->
    <rect x="17" y="50.400" width="68.400" height="13.600" rx="6.800" fill="#4a1f9e" opacity=".55"/>
    <circle cx="23.600" cy="57.200" r="5.600" fill="#1d6df5"/>
    <path d="M20.600 57.600a3 3 0 0 1 5.200-2M26.600 56.800a3 3 0 0 1-5.200 2" stroke="#fff" stroke-width="1.100" fill="none" stroke-linecap="round"/>
    <text x="31" y="57" font-size="5.600" font-weight="700" fill="#fff">诺云直播</text>
    <path d="M31.200 62.200c0-1 .8-1.400 1-2.400.7.600 1.200 1.300 1.200 2.200a1.100 1.100 0 0 1-2.200.2z" fill="#fff"/>
    <text x="34.400" y="62.600" font-size="3.200" fill="#e6dcff">80</text>
    <rect x="60.400" y="51.400" width="24.600" height="11.600" rx="5.800" fill="url(#fw)"/>
    <text x="72.800" y="59.200" font-size="5.200" font-weight="700" fill="#fff" text-anchor="middle">+关注</text>
    <!-- round buttons -->
    <circle cx="164.400" cy="57" r="6.600" fill="#4a2a8a" opacity=".62"/>
    <path d="M161.800 59.600a1.700 1.700 0 1 1 1.700-1.700v-1.800a1.700 1.700 0 1 1 1.700 1.700" stroke="#fff" stroke-width=".9" fill="none" stroke-linecap="round" transform="rotate(20 164.400 57)"/>
    <circle cx="24.600" cy="83.700" r="6.600" fill="#4a2a8a" opacity=".62"/>
    <path d="M21.600 84.200a3 3 0 0 1 5.400-1.800M27.600 83.300a3 3 0 0 1-5.400 1.800" stroke="#fff" stroke-width=".9" fill="none" stroke-linecap="round"/>
    <path d="M27.600 80.800v1.900h-1.900M21.600 86.700v-1.900h1.900" stroke="#fff" stroke-width=".7" fill="none"/>
    <!-- task center -->
    <rect x="154.400" y="76.400" width="13.600" height="14" rx="1.200" fill="#cfe0ff"/>
    <rect x="155.600" y="77.400" width="11.200" height="12" rx=".8" fill="#9fc0ff"/>
    <g fill="#fff"><rect x="157" y="79.200" width="1.600" height="1.400"/><rect x="159.600" y="79.200" width="5.800" height="1.400"/><rect x="157" y="82" width="1.600" height="1.400"/><rect x="159.600" y="82" width="5.800" height="1.400"/><rect x="157" y="84.800" width="1.600" height="1.400"/><rect x="159.600" y="84.800" width="5.800" height="1.400"/></g>
    <rect x="151" y="88" width="20.400" height="5.800" rx="1.400" fill="#3f7df2"/>
    <text x="161.200" y="92.600" font-size="4" font-weight="700" fill="#fff" text-anchor="middle">任务中心</text>
  </g>
  <!-- reward box (overflows frame) -->
  <rect x="145.400" y="96.200" width="37.400" height="37.800" rx="3.600" fill="#5a2cc0" stroke="#b59cf5" stroke-width=".9"/>
  <path d="M145.900 121.500h36.400v8.900a3.100 3.100 0 0 1-3.100 3.100h-30.200a3.100 3.100 0 0 1-3.100-3.100z" fill="#cf2a5a"/>
  <path d="M160 106.800c-1.400-1-2-2.400-1.200-3 .9-.6 2.200.2 3.200.2.900 0 1.600-.8 2.600-.8s1.400.7 2.300.6c.9 0 1.900-.7 2.600-.1.700.7 0 2-1.400 3.100z" fill="#f0503c"/>
  <path d="M160.400 106.400h7.400c3.800 2.400 6.400 6.200 6.400 10.200 0 4.600-3.800 7.200-10.100 7.200s-10.100-2.600-10.100-7.200c0-4 2.600-7.800 6.400-10.200z" fill="#ee3d36"/>
  <path d="M154.600 113.800c2.400 3.800 6 5.800 9.500 5.800s7.100-2 9.500-5.800c.4 1 .6 1.900.6 2.800 0 4.600-3.800 7.200-10.100 7.200s-10.100-2.600-10.100-7.200c0-.9.200-1.800.6-2.800z" fill="#d92c3a"/>
  <rect x="159.400" y="106" width="9.400" height="1.800" rx=".9" fill="#f6c546"/>
  <circle cx="164.100" cy="114.800" r="3.600" fill="#f9cf5a"/><circle cx="164.100" cy="114.800" r="2.300" fill="#f2a93a"/>
  <text x="164.100" y="131" font-size="4.600" font-weight="700" fill="#fff" text-anchor="middle">领取</text>
  <g clip-path="url(#scr)">
    <!-- chat -->
    <g font-size="5.300" font-weight="700">
      <text x="81" y="247" font-size="4.200" font-weight="400" fill="#c9b8ff" text-anchor="middle" opacity=".75">08-07 17:28</text>
      <rect x="18" y="249.200" width="58.800" height="8.500" rx="4.250" fill="#3a1f8c" opacity=".5"/>
      <circle cx="24.600" cy="253.500" r="3.100" fill="#f7c63c"/><circle cx="23.600" cy="252.900" r=".6" fill="#7a4a12"/><circle cx="25.600" cy="252.900" r=".6" fill="#7a4a12"/><path d="M23.400 254.600q1.200 1 2.400 0" stroke="#7a4a12" stroke-width=".5" fill="none"/>
      <text x="28.600" y="255.400" fill="#7cd9ff">嗨呀！</text><text x="47" y="255.400" fill="#fff">这是啥意思</text>
      <rect x="18" y="259.500" width="85.800" height="8.500" rx="4.250" fill="#3a1f8c" opacity=".5"/>
      <circle cx="24.600" cy="263.800" r="3.100" fill="#f7c63c"/><circle cx="23.600" cy="263.200" r=".6" fill="#7a4a12"/><circle cx="25.600" cy="263.200" r=".6" fill="#7a4a12"/><path d="M23.400 264.900q1.200 1 2.400 0" stroke="#7a4a12" stroke-width=".5" fill="none"/>
      <text x="28.600" y="265.700" fill="#7cd9ff">嗨呀！</text><text x="47" y="265.700" fill="#fff">这个商品性价比怎么样</text>
      <rect x="18" y="269.900" width="91.500" height="8.500" rx="4.250" fill="#3a1f8c" opacity=".5"/>
      <circle cx="24.600" cy="274.200" r="3.100" fill="#f7c63c"/><circle cx="23.600" cy="273.600" r=".6" fill="#7a4a12"/><circle cx="25.600" cy="273.600" r=".6" fill="#7a4a12"/><path d="M23.400 275.300q1.200 1 2.400 0" stroke="#7a4a12" stroke-width=".5" fill="none"/>
      <text x="28.600" y="276.100" fill="#7cd9ff">嗨呀！</text><text x="47" y="276.100" fill="#fff">这个人商品性价比怎么样</text>
      <rect x="18" y="280.200" width="85.800" height="8.500" rx="4.250" fill="#3a1f8c" opacity=".5"/>
      <circle cx="24.600" cy="284.500" r="3.100" fill="#f7c63c"/><circle cx="23.600" cy="283.900" r=".6" fill="#7a4a12"/><circle cx="25.600" cy="283.900" r=".6" fill="#7a4a12"/><path d="M23.400 285.600q1.200 1 2.400 0" stroke="#7a4a12" stroke-width=".5" fill="none"/>
      <text x="28.600" y="286.400" fill="#7cd9ff">嗨呀！</text><text x="47" y="286.400" fill="#fff">这个商品性价比怎么样</text>
      <text x="81" y="294.200" font-size="4.200" font-weight="400" fill="#c9b8ff" text-anchor="middle" opacity=".75">08-07 17:55</text>
      <rect x="18" y="296.300" width="56.800" height="8.500" rx="4.250" fill="#3a1f8c" opacity=".5"/>
      <text x="21" y="302.500" fill="#7cd9ff">稻草人</text><text x="39" y="302.500" fill="#fff">什么深刻思考</text>
      <rect x="18" y="306.500" width="84.400" height="8.500" rx="4.250" fill="#3a1f8c" opacity=".5"/>
      <rect x="21" y="308" width="19.600" height="5.500" rx="2.750" fill="#16161c"/><text x="30.800" y="312.200" font-size="3.400" fill="#fff" text-anchor="middle">高级粉丝</text>
      <text x="41.600" y="312.700" fill="#7cd9ff">踏雪-djw</text><text x="67" y="312.700" fill="#fff">主播讲的很好</text>
      <text x="81" y="320.600" font-size="4.200" font-weight="400" fill="#c9b8ff" text-anchor="middle" opacity=".75">08-07 18:04</text>
      <rect x="18" y="322.400" width="125.400" height="8.700" rx="4.350" fill="#3a1f8c" opacity=".5"/>
      <text x="21" y="328.700" fill="#7cd9ff">来自河南的网友x72268</text><text x="80.400" y="328.700" fill="#fff">这个主播讲的也太好了吧</text>
    </g>
    <!-- side circles -->
    <circle cx="160.700" cy="275.800" r="9.600" fill="#fddcc8"/>
    <g fill="#f59a4a"><path d="M160.700 269.400l6.400 3-6.400 3-6.400-3z"/><path d="M154.300 275.200l1.800-.8 4.600 2.200 4.600-2.200 1.800.8-6.400 3z" opacity=".85"/><path d="M154.300 278l1.800-.8 4.600 2.200 4.600-2.200 1.800.8-6.400 3z" opacity=".7"/></g>
    <circle cx="160.700" cy="297.900" r="9.600" fill="#fddcc8"/>
    <path d="M166.400 292c-3.400-.2-6.200 1.400-8 4.400l-2.200.4-1.400 2.200 2.400.2 2 2 .2 2.400 2.200-1.400.4-2.200c3-1.800 4.600-4.600 4.400-8z" fill="#f59a4a"/><circle cx="162.800" cy="295.600" r="1.200" fill="#fddcc8"/><path d="M156.400 300.600l-1.800 3.200 3.200-1.800z" fill="#f7b36a"/>
    <circle cx="160.700" cy="320.400" r="9.600" fill="#f8c4da"/>
    <path d="M160.700 326.400c-3.600-2.600-5.800-4.800-5.800-7.400a3 3 0 0 1 5.800-1.200 3 3 0 0 1 5.800 1.200c0 2.600-2.200 4.800-5.800 7.400z" fill="#ff4f73"/>
    <rect x="155.600" y="327.400" width="10.200" height="4.600" rx="2.300" fill="#f0426f"/><text x="160.700" y="331" font-size="3.200" fill="#fff" text-anchor="middle">100</text>
    <!-- input -->
    <rect x="18" y="340.300" width="86.800" height="13.400" rx="6.700" fill="#4a2a9a" opacity=".45"/>
    <text x="21.400" y="349" font-size="4.600" fill="#e0d4ff">说点什么吧~</text>
    <g fill="#f4eeff"><path d="M109.400 345.200a3 3 0 0 1 3-3h1.800v5h-4.800zM115 342.200h1.800a3 3 0 0 1 3 3v2H115zM109.400 348h4.800v5h-1.800a3 3 0 0 1-3-3zM115 348h4.800v2a3 3 0 0 1-3 3H115z"/></g>
    <g><rect x="125.600" y="344.400" width="10.200" height="3" rx=".5" fill="#ffb340"/><rect x="126.400" y="347.400" width="8.600" height="5.600" rx=".6" fill="#ff9a2e"/><rect x="129.900" y="344.400" width="1.600" height="8.600" fill="#ffd98a"/><path d="M130.700 344.400c-1.600-2.800-3.600-2.600-3.400-1.200.2 1 1.800 1.200 3.400 1.200zM130.700 344.400c1.600-2.800 3.600-2.600 3.400-1.200-.2 1-1.800 1.200-3.400 1.200z" fill="#ff8a2a"/></g>
    <g><rect x="142.600" y="341.800" width="9.800" height="11.400" rx="1.400" fill="#f0283c"/><path d="M142.600 343.200a1.400 1.400 0 0 1 1.400-1.400h7a1.400 1.400 0 0 1 1.400 1.400v1.800l-4.900 2-4.900-2z" fill="#ff5a5a"/><circle cx="147.500" cy="347" r="1.300" fill="#ffd25a"/></g>
    <g><path d="M158.400 345.600l5.200-3.800 5.200 3.800v6a1.600 1.600 0 0 1-1.600 1.600h-7.200a1.600 1.600 0 0 1-1.600-1.600z" fill="#8f6cf5"/><rect x="160" y="341.600" width="7.200" height="6" rx=".8" fill="#c9b6ff"/><path d="M158.400 345.800l5.200 3.600 5.200-3.600v5.800a1.600 1.600 0 0 1-1.600 1.600h-7.200a1.600 1.600 0 0 1-1.600-1.600z" fill="#7a55ee"/><path d="M162 343.600l1.200 1.200 2.200-2" stroke="#6a49d8" stroke-width=".6" fill="none"/></g>
    <rect x="65" y="360.600" width="58" height="1.500" rx=".75" fill="#d9cdf3"/>
  </g>
</svg>
<div class="abs" style="left:1882px;top:848px;width:20px;height:20px;border-radius:10px;background:#d3e2fc;z-index:4"><svg width="20" height="20" viewBox="0 0 20 20"><path d="M7.200 7.200l5.600 5.600M12.800 7.200l-5.600 5.600" stroke="#fff" stroke-width="1.800" stroke-linecap="round"/></svg></div>
<div class="abs" style="left:1762px;top:874px;width:140px;height:42px;border-radius:7px;overflow:hidden;background:linear-gradient(90deg,#4f9af5 0%,#3a82f3 45%,#1267f1 100%);z-index:4">
  <div class="abs" style="left:-30px;top:-34px;width:72px;height:60px;border-radius:50%;background:linear-gradient(120deg,#6aeafc,#52b4f7);opacity:.95"></div>
  <div class="abs" style="left:82px;top:22px;width:70px;height:50px;border-radius:50%;background:#2a7bf5;opacity:.55"></div>
  <div class="abs" style="left:120px;top:6px;width:9px;height:9px;border-radius:50%;background:#2f7cf4;opacity:.8"></div>
  <svg class="abs" style="left:14px;top:13px" width="24" height="20" viewBox="0 0 24 20"><defs><linearGradient id="dbg" x1="0" y1="0" x2="0" y2="1"><stop offset="0" stop-color="#fff"/><stop offset="1" stop-color="#d5e4fb"/></linearGradient></defs><rect x="2.400" y="14.400" width="4.200" height="4.200" rx="2.100" fill="url(#dbg)"/><rect x="9.600" y="2.400" width="4.200" height="16.200" rx="2.100" fill="url(#dbg)"/><rect x="17.400" y="4.800" width="4.200" height="13.800" rx="2.100" fill="url(#dbg)"/></svg>
  <div class="abs" style="left:44px;top:0;line-height:47px;font-size:20px;font-weight:900;color:#fff;white-space:nowrap;letter-spacing:.2px;text-shadow:0 1px 2px rgba(20,60,160,.35)">数据面板</div>
</div>
</body>
</html>
